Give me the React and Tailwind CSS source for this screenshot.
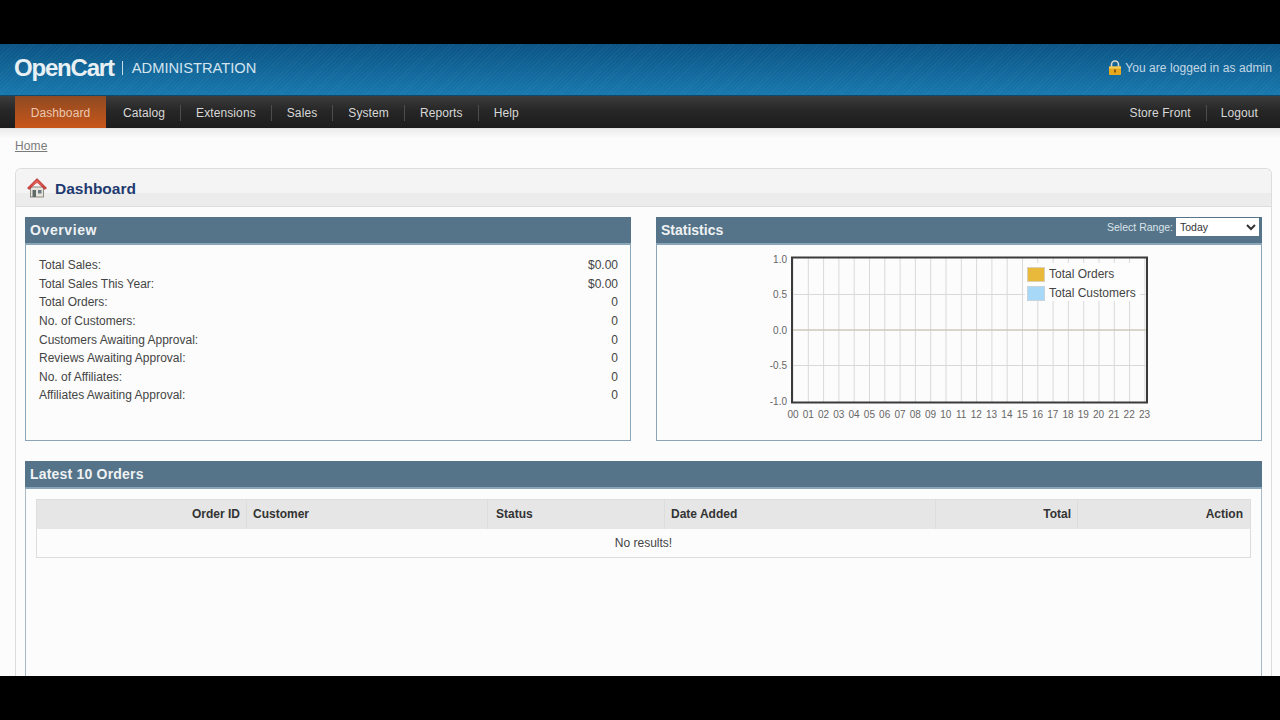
import React from "react";

const menuLeft = ["Catalog", "Extensions", "Sales", "System", "Reports", "Help"];

const overview = [
  ["Total Sales:", "$0.00"],
  ["Total Sales This Year:", "$0.00"],
  ["Total Orders:", "0"],
  ["No. of Customers:", "0"],
  ["Customers Awaiting Approval:", "0"],
  ["Reviews Awaiting Approval:", "0"],
  ["No. of Affiliates:", "0"],
  ["Affiliates Awaiting Approval:", "0"],
];

const hours = Array.from({ length: 24 }, (_, i) => String(i).padStart(2, "0"));

const LockIcon = () => (
  <svg width="14" height="16" viewBox="0 0 14 16">
    <path d="M3.5 7V4.5a3.5 3.5 0 0 1 7 0V7" fill="none" stroke="#d8d8d0" strokeWidth="1.6" />
    <rect x="1" y="6.5" width="12" height="8.5" rx="1" fill="#e8a81e" />
    <rect x="1" y="6.5" width="12" height="2" fill="#f6cf5a" />
    <rect x="6" y="9.5" width="2" height="3" fill="#8a5a10" />
  </svg>
);

const HomeIcon = () => (
  <svg width="22" height="22" viewBox="0 0 22 22">
    <rect x="4.5" y="10" width="13" height="10" fill="#e6e4dc" stroke="#77736a" strokeWidth="0.8" />
    <rect x="6.5" y="13" width="3.5" height="7" fill="#5f6a66" />
    <rect x="12" y="13" width="3.5" height="3.5" fill="#6a7a80" />
    <path d="M11 1.5 1.5 11l1.5 1.5L11 5l8 7.5 1.5-1.5z" fill="#d2403a" stroke="#a82a26" strokeWidth="0.6" />
    <path d="M11 3 4.5 9.5 11 6l6.5 3.5z" fill="#e0605a" />
  </svg>
);

const Chart = () => {
  const left = 135;
  const width = 355;
  const top = 12.5;
  const height = 145;
  const step = 15.3;
  return (
    <svg width="604" height="196" viewBox="0 0 604 196">
      {hours.map((h, i) => (
        <g key={h}>
          <line
            x1={left + 1 + i * step}
            x2={left + 1 + i * step}
            y1={top}
            y2={top + height}
            stroke="#d9d9d9"
          />
          <text
            x={left + 1 + i * 15.28}
            y={top + 160}
            textAnchor="middle"
            fontSize="10"
            fontFamily="Liberation Sans"
            fill="#666"
          >
            {h}
          </text>
        </g>
      ))}
      {[49, 120].map((y) => (
        <line key={y} x1={left} x2={left + width} y1={y + 0.5} y2={y + 0.5} stroke="#d9d9d9" />
      ))}
      <line x1={left} x2={left + width} y1="85" y2="85" stroke="#cfc9b8" strokeWidth="1.5" />
      {/* legend */}
      <rect x="368" y="18" width="115" height="38" fill="#fdfdfd" />
      <rect x="370.5" y="22.5" width="17" height="14" fill="#e8b93a" stroke="#d8d0b8" />
      <rect x="370.5" y="41.5" width="17" height="14" fill="#a8d8f8" stroke="#c8d4dc" />
      <text x="392" y="33" fontSize="12" fontFamily="Liberation Sans" fill="#444">
        Total Orders
      </text>
      <text x="392" y="52" fontSize="12" fontFamily="Liberation Sans" fill="#444">
        Total Customers
      </text>
      <rect x={left} y={top} width={width} height={height} fill="none" stroke="#3a3a3a" strokeWidth="2" />
      {[
        ["1.0", 18],
        ["0.5", 53],
        ["0.0", 89],
        ["-0.5", 124],
        ["-1.0", 160],
      ].map(([label, y]) => (
        <text
          key={label}
          x={left - 5}
          y={y}
          textAnchor="end"
          fontSize="10"
          fontFamily="Liberation Sans"
          fill="#666"
        >
          {label}
        </text>
      ))}
    </svg>
  );
};

const App = () => {
  return (
    <div className="w-[1280px] h-[720px] flex flex-col overflow-hidden bg-black font-['Liberation_Sans',Arial,sans-serif] text-xs text-[#333]">
      <div className="h-[44px] shrink-0 bg-black"></div>

      <div className="h-[632px] shrink-0 overflow-hidden bg-[#fcfcfc]">
        {/* Header */}
        <div className="h-[52px] flex items-center justify-between pl-[14px] pr-[8px] pb-[4px] border-b border-[#0c4a70] bg-[repeating-linear-gradient(135deg,rgba(255,255,255,0.035)_0px,rgba(255,255,255,0.035)_1px,transparent_1px,transparent_3px),linear-gradient(to_bottom,#0b5485,#1878ad)]">
          <div className="flex items-center">
            <span className="text-[24px] leading-none font-bold tracking-[-1.2px] text-[#e8f0f4]">OpenCart</span>
            <span className="ml-[8px] h-[14px] w-px bg-[#c8dce8]"></span>
            <span className="ml-[9px] pt-[2px] text-[14.7px] leading-none text-[#d4e4ee]">ADMINISTRATION</span>
          </div>
          <div className="flex items-center gap-[3px] text-[#c4d8e4]">
            <LockIcon />
            <span className="tracking-[0.07px]">You are logged in as admin</span>
          </div>
        </div>

        {/* Menu */}
        <div className="h-[33px] flex justify-between pl-[15px] pr-[22px] border-b border-[#e4e4e4] bg-[linear-gradient(to_bottom,#3c3c3c,#272727_45%,#1c1c1c)] text-[#d8d8d8] tracking-[0.1px]">
          <div className="flex items-center">
            <div className="h-[32px] w-[91px] pt-[2px] flex items-center justify-center text-[#ecc8b0] bg-[linear-gradient(to_bottom,#8f4a22,#c8561a)]">
              Dashboard
            </div>
            <span className="w-[2px]"></span>
            {menuLeft.map((item, i) => (
              <div key={item} className="flex items-center pt-[2px]">
                <span className="px-[15px]">{item}</span>
                {i < menuLeft.length - 1 && <span className="h-[16px] w-px bg-[#4c4c4c]"></span>}
              </div>
            ))}
          </div>
          <div className="flex items-center pt-[2px]">
            <span className="pr-[15px]">Store Front</span>
            <span className="h-[16px] w-px bg-[#4c4c4c]"></span>
            <span className="pl-[14px]">Logout</span>
          </div>
        </div>

        {/* Breadcrumb */}
        <div className="h-[39px] pl-[15px] pt-[9px] bg-[linear-gradient(to_bottom,#ececec,#fcfcfc_10px)]">
          <span className="text-[#7a7a7a] underline tracking-[0.1px]">Home</span>
        </div>

        {/* Main box */}
        <div className="ml-[15px] w-[1257px] h-[520px] border border-[#dddddd] rounded-t-[6px] border-b-0">
          <div className="h-[38px] flex items-center pl-[10px] gap-[7px] border-b border-[#dddddd] rounded-t-[6px] bg-[linear-gradient(to_bottom,#f4f4f4_0px,#f4f4f4_24px,#ececec_24px,#ececec)]">
            <HomeIcon />
            <span className="pt-[3px] text-[15.5px] font-bold text-[#1f3a70]">Dashboard</span>
          </div>

          <div className="px-[9px] pt-[10px]">
            <div className="flex justify-between">
              {/* Overview */}
              <div className="w-[606px] h-[224px] border border-[#8aa4b8] border-t-0">
                <div className="-mx-px h-[28px] flex items-center pl-[5px] bg-[#557489] border-b-2 border-[#8aa4b8] text-sm font-bold tracking-[0.6px] text-[#eef2f4]">
                  Overview
                </div>
                <div className="pl-[13px] pr-[12px] pt-[11px]">
                  {overview.map(([label, value]) => (
                    <div key={label} className="h-[18.6px] flex items-center justify-between text-[#444]">
                      <span>{label}</span>
                      <span>{value}</span>
                    </div>
                  ))}
                </div>
              </div>

              {/* Statistics */}
              <div className="w-[606px] h-[224px] border border-[#8aa4b8] border-t-0">
                <div className="-mx-px h-[28px] flex justify-between pl-[5px] pr-[3px] bg-[#557489] border-b-2 border-[#8aa4b8]">
                  <span className="text-sm font-bold text-[#eef2f4] leading-[27px]">Statistics</span>
                  <div className="flex items-start gap-[3px] pt-[1px]">
                    <span className="text-[10.5px] leading-[18px] text-[#dbe4ea]">Select Range:</span>
                    <select className="w-[83px] h-[18px] bg-white text-[10.5px] text-[#333] leading-none">
                      <option>Today</option>
                    </select>
                  </div>
                </div>
                <Chart />
              </div>
            </div>

            {/* Latest orders */}
            <div className="mt-[20px] w-[1237px] h-[300px] border-x border-[#a8b8c4]">
              <div className="-mx-px h-[28px] flex items-center pl-[5px] bg-[#557489] border-b-2 border-[#8aa4b8] text-sm font-bold tracking-[0.2px] text-[#eef2f4]">
                Latest 10 Orders
              </div>
              <div className="px-[10px] pt-[10px]">
                <table className="w-[1215px] table-fixed border-collapse border border-[#dddddd]">
                  <thead>
                    <tr className="h-[29px] bg-[#e6e6e6] text-[#333] font-bold">
                      <td className="w-[210px] pr-[6px] text-right border-r border-[#dddddd]">Order ID</td>
                      <td className="w-[241px] pl-[6px] border-r border-[#dddddd]">Customer</td>
                      <td className="w-[177px] pl-[8px] border-r border-[#dddddd]">Status</td>
                      <td className="w-[271px] pl-[6px] border-r border-[#dddddd]">Date Added</td>
                      <td className="w-[142px] pr-[6px] text-right border-r border-[#dddddd]">Total</td>
                      <td className="pr-[7px] text-right">Action</td>
                    </tr>
                  </thead>
                  <tbody>
                    <tr className="h-[29px]">
                      <td colSpan={6} className="text-center text-[#444]">No results!</td>
                    </tr>
                  </tbody>
                </table>
              </div>
            </div>
          </div>
        </div>
      </div>

      <div className="h-[44px] shrink-0 bg-black"></div>
    </div>
  );
};

export default App;
